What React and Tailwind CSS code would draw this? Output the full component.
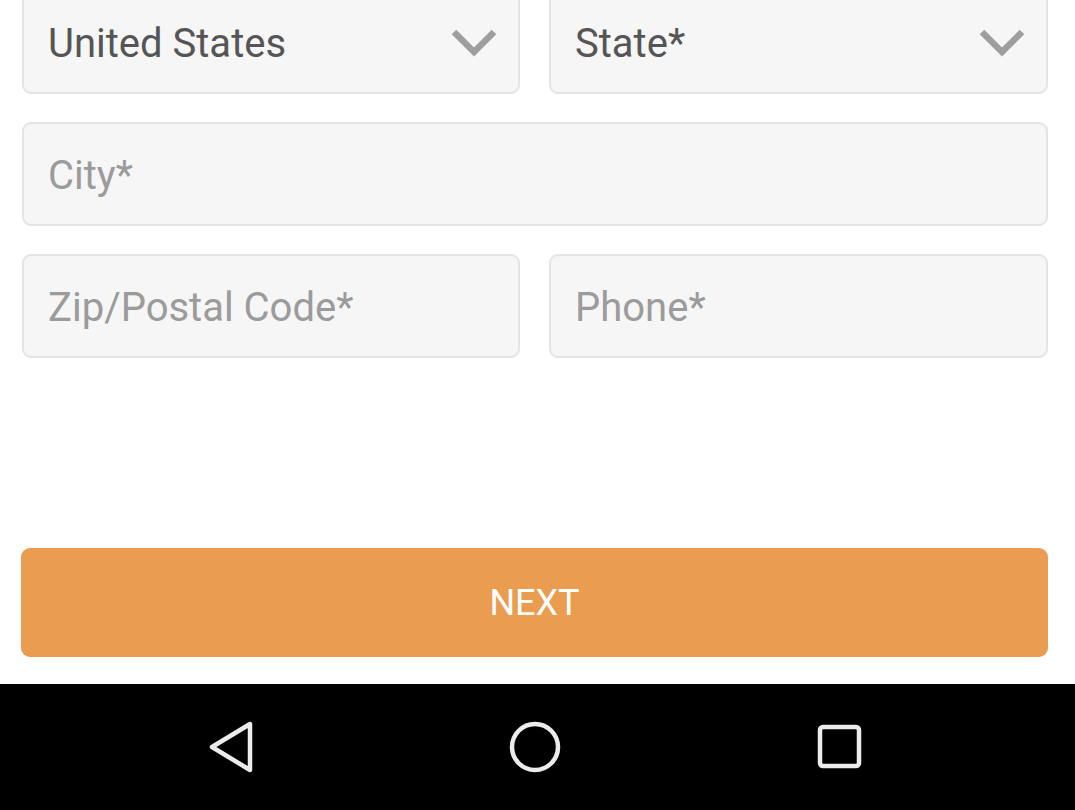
import React from "react";

const font = { fontFamily: "Roboto, 'Noto Sans', sans-serif" };

function Chevron() {
  return (
    <svg width="46" height="30" viewBox="0 0 46 30" className="shrink-0">
      <polyline points="3,5 23,25 43,5" fill="none" stroke="#9e9e9e" strokeWidth="6.5" strokeLinejoin="miter" />
    </svg>
  );
}

function Field({ children, placeholder, select }) {
  return (
    <div className="h-[104px] rounded-[9px] border-2 border-[#e4e4e4] bg-[#f6f6f6] flex items-center pl-[24px] pr-[21px]">
      <span className={`flex-1 pt-[4px] text-[40px] leading-none ${placeholder ? "text-[#9b9b9b]" : "text-[#555555]"}`}>
        {children}
      </span>
      {select && <Chevron />}
    </div>
  );
}

export default function App() {
  return (
    <div className="w-[1075px] h-[810px] bg-white flex flex-col overflow-hidden" style={font}>
      <div className="flex flex-col gap-[28px] pl-[22px] pr-[27px] -mt-[10px]">
        <div className="grid grid-cols-[498px_1fr] gap-[29px]">
          <Field select>United States</Field>
          <Field select>State*</Field>
        </div>
        <Field placeholder>City*</Field>
        <div className="grid grid-cols-[498px_1fr] gap-[29px]">
          <Field placeholder>Zip/Postal Code*</Field>
          <Field placeholder>Phone*</Field>
        </div>
      </div>
      <div className="flex-1" />
      <div className="pl-[21px] pr-[27px] pb-[27px]">
        <button className="w-full h-[109px] rounded-[9px] bg-[#ea9c50] text-white text-[36px] leading-none flex items-center justify-center">
          NEXT
        </button>
      </div>
      <div className="h-[126px] bg-black shrink-0">
        <svg width="1075" height="126" viewBox="0 0 1075 126" className="block">
          <polygon points="212,63 250,40 250,86" fill="none" stroke="#ececec" strokeWidth="4.5" strokeLinejoin="round" />
          <circle cx="535" cy="63" r="23" fill="none" stroke="#ececec" strokeWidth="4.5" />
          <rect x="820" y="43" width="39" height="39" rx="3" fill="none" stroke="#ececec" strokeWidth="4.5" />
        </svg>
      </div>
    </div>
  );
}
